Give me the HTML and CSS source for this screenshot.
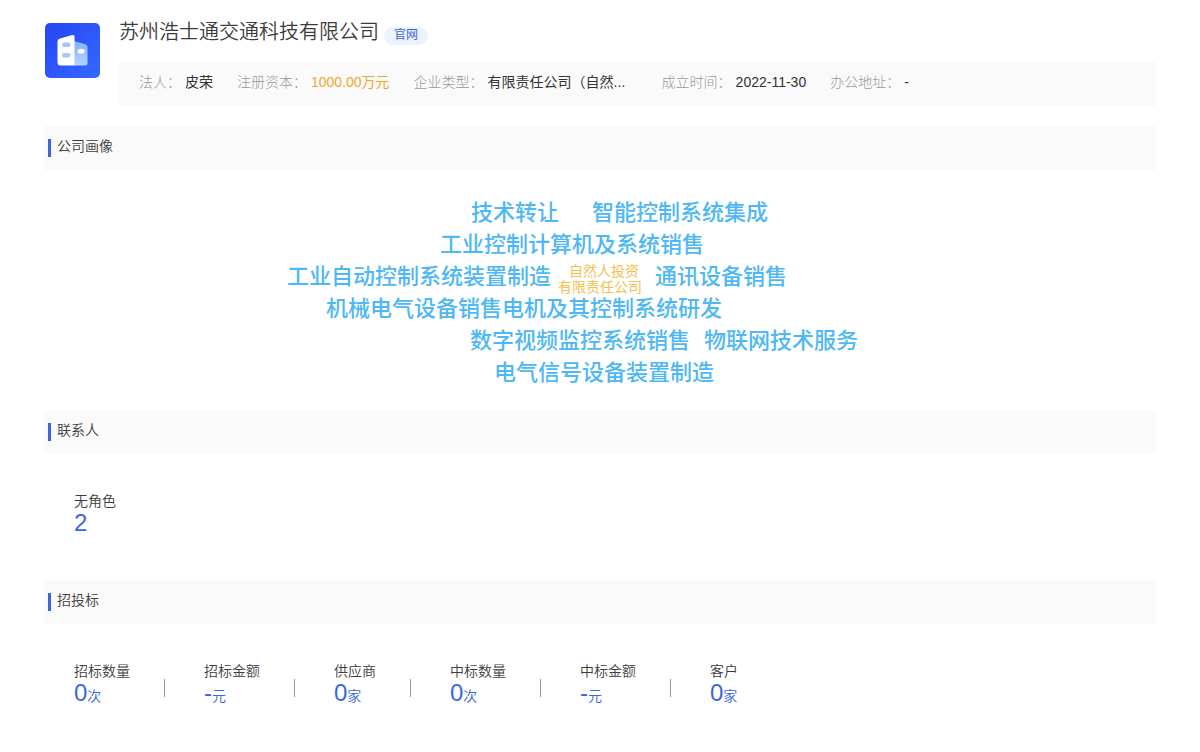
FILE: index.html
```html
<!DOCTYPE html>
<html lang="zh-CN">
<head>
<meta charset="utf-8">
<title>苏州浩士通交通科技有限公司</title>
<link rel="stylesheet" href="styles.css">
</head>
<body>
<main class="page">
  <header class="company">
    <svg class="logo" viewBox="0 0 55 55" aria-hidden="true">
      <defs>
        <linearGradient id="logo-bg" x1="0" y1="0" x2="1" y2="1">
          <stop offset="0" stop-color="#2546f5"/>
          <stop offset="1" stop-color="#3568ff"/>
        </linearGradient>
        <linearGradient id="logo-side" x1="0" y1="0" x2="0" y2="1">
          <stop offset="0" stop-color="#7fb0ff"/>
          <stop offset="1" stop-color="#b4d3ff"/>
        </linearGradient>
      </defs>
      <rect width="55" height="55" rx="5" fill="url(#logo-bg)"/>
      <path d="M29 18L40.500 21.200Q42.500 21.800 42.500 23.800V40Q42.500 42.500 40 42.500H29Z" fill="url(#logo-side)"/>
      <path d="M15 15.500L27.500 12Q29.500 11.500 29.500 13.500V42.500H15.500Q12.500 42.500 12.500 39.500V18.500Q12.500 16.200 15 15.500Z" fill="#fff"/>
      <rect x="17" y="19.500" width="8.500" height="4.500" rx="2.200" fill="#a5c6fc"/>
      <rect x="17" y="30" width="8.500" height="4.500" rx="2.200" fill="#a5c6fc"/>
      <rect x="32.500" y="26" width="7" height="4.500" rx="2.200" fill="#fff"/>
    </svg>
    <div class="company-main">
      <div class="title-row">
        <h1 class="title">苏州浩士通交通科技有限公司</h1>
        <a class="site-link" href="#">官网</a>
      </div>
      <dl class="facts">
        <div class="fact"><dt>法人：</dt><dd>皮荣</dd></div>
        <div class="fact"><dt>注册资本：</dt><dd class="money">1000.00万元</dd></div>
        <div class="fact"><dt>企业类型：</dt><dd class="kind">有限责任公司（自然...</dd></div>
        <div class="fact"><dt>成立时间：</dt><dd>2022-11-30</dd></div>
        <div class="fact"><dt>办公地址：</dt><dd>-</dd></div>
      </dl>
    </div>
  </header>

  <section class="section">
    <h2 class="section-title">公司画像</h2>
    <div class="cloud">
      <div class="cloud-canvas">
        <span class="word w1">技术转让</span>
        <span class="word w2">智能控制系统集成</span>
        <span class="word w3">工业控制计算机及系统销售</span>
        <span class="word w4">工业自动控制系统装置制造</span>
        <span class="core"><span class="core-lead">自然人投资</span><br>有限责任公司</span>
        <span class="word w5">通讯设备销售</span>
        <span class="word w6">机械电气设备销售</span>
        <span class="word w7">电机及其控制系统研发</span>
        <span class="word w8">数字视频监控系统销售</span>
        <span class="word w9">物联网技术服务</span>
        <span class="word w10">电气信号设备装置制造</span>
      </div>
    </div>
  </section>

  <section class="section">
    <h2 class="section-title">联系人</h2>
    <dl class="stats">
      <div class="stat"><dt>无角色</dt><dd>2</dd></div>
    </dl>
  </section>

  <section class="section">
    <h2 class="section-title">招投标</h2>
    <dl class="stats">
      <div class="stat"><dt>招标数量</dt><dd>0<small>次</small></dd></div>
      <div class="stat"><dt>招标金额</dt><dd>-<small>元</small></dd></div>
      <div class="stat"><dt>供应商</dt><dd>0<small>家</small></dd></div>
      <div class="stat"><dt>中标数量</dt><dd>0<small>次</small></dd></div>
      <div class="stat"><dt>中标金额</dt><dd>-<small>元</small></dd></div>
      <div class="stat"><dt>客户</dt><dd>0<small>家</small></dd></div>
    </dl>
  </section>
</main>
</body>
</html>
```
FILE: styles.css
```css
* {
  box-sizing: border-box;
}

body {
  margin: 0;
  background: #fff;
  color: #3c3c3c;
  font-family: "Liberation Sans", "Noto Sans CJK SC", sans-serif;
  font-size: 14px;
  line-height: 20px;
}

h1,
h2,
dl,
dd {
  margin: 0;
  font-weight: 350;
}

.page {
  padding: 18px 44px 0;
}

.company {
  display: flex;
  gap: 19px;
  margin-bottom: 20px;
}

.logo {
  flex: none;
  width: 55px;
  height: 55px;
  margin: 5px 0 0 1px;
}

.company-main {
  flex: 1;
  min-width: 0;
}

.title-row {
  display: flex;
  align-items: flex-end;
  gap: 5px;
  height: 28px;
  margin-bottom: 16px;
}

.title {
  font-size: 20px;
  line-height: 28px;
}

.site-link {
  margin-bottom: 1px;
  padding: 0 10px 2px;
  border-radius: 9px;
  background: #ecf2fe;
  color: #3b66e0;
  font-size: 12px;
  line-height: 16px;
  text-decoration: none;
}

.facts {
  display: flex;
  flex-wrap: wrap;
  gap: 0 24px;
  padding: 10px 20px 14px;
  background: #fafafa;
}

.fact {
  display: flex;
  gap: 4px;
}

.fact dt {
  color: #999;
  font-weight: 300;
}

.fact dd {
  color: #333;
  font-weight: 400;
}

.fact .money {
  color: #f0a730;
}

.fact .kind {
  width: 150px;
  white-space: nowrap;
}

.section-title {
  display: flex;
  align-items: center;
  gap: 6px;
  height: 44px;
  padding: 0 4px 4px;
  background: #fafafa;
  font-size: 14px;
  line-height: 20px;
}

.section-title::before {
  content: "";
  width: 3px;
  height: 18px;
  margin-top: 4px;
  background: #3b66e0;
}

.cloud {
  display: flex;
  justify-content: center;
  height: 240px;
}

.cloud-canvas {
  position: relative;
  flex: none;
  width: 640px;
}

.word,
.core {
  position: absolute;
  white-space: nowrap;
}

.word {
  color: #4db8f5;
  font-size: 22px;
  font-weight: 500;
  line-height: 32px;
}

.core {
  top: 93px;
  left: 278px;
  color: #f5c04e;
  font-size: 14px;
  line-height: 16px;
  text-align: center;
}

.core-lead {
  padding-left: 8px;
}

.w1 { top: 27px; left: 191px; }
.w2 { top: 27px; left: 312px; }
.w3 { top: 59px; left: 160px; }
.w4 { top: 91px; left: 7px; }
.w5 { top: 91px; left: 375px; }
.w6 { top: 123px; left: 46px; }
.w7 { top: 123px; left: 222px; }
.w8 { top: 155px; left: 190px; }
.w9 { top: 155px; left: 424px; }
.w10 { top: 187px; left: 214px; }

.stats {
  display: flex;
  padding: 37px 30px 45px;
}

.stat {
  position: relative;
  padding-right: 35px;
  margin-right: 39px;
}

.stat:not(:last-child)::after {
  content: "";
  position: absolute;
  right: 0;
  bottom: 11px;
  width: 1px;
  height: 18px;
  background: #999;
}

.stat dt {
  line-height: 20px;
}

.stat dt {
  font-weight: 350;
}

.stat dd {
  color: #3b66e0;
  font-size: 24px;
  line-height: 24px;
}

.stat small {
  font-size: 14px;
}
```
